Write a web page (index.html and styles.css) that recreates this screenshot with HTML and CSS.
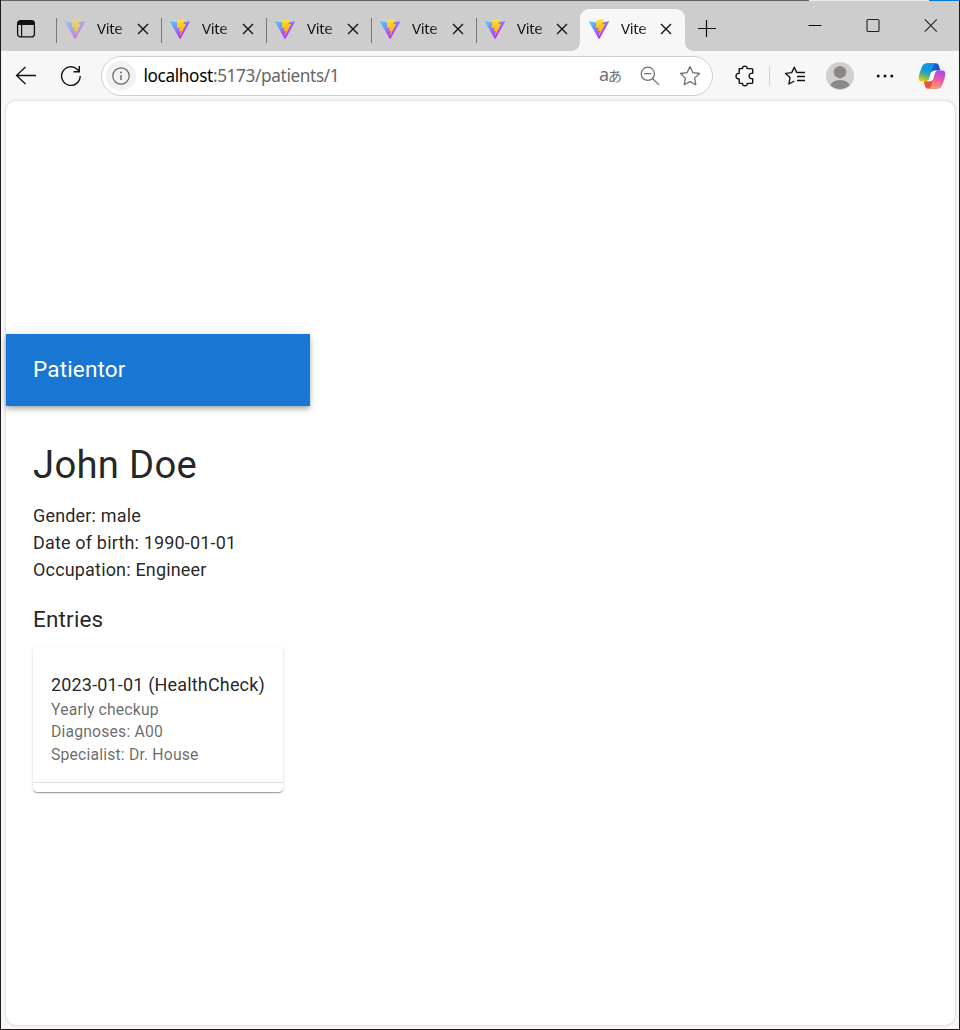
FILE: index.html
```html
<!DOCTYPE html>
<html lang="en">
<head>
<meta charset="utf-8">
<title>Patientor</title>
<link rel="stylesheet" href="styles.css">
</head>
<body>
<svg class="defs" width="0" height="0" aria-hidden="true">
  <defs>
    <linearGradient id="vite-a" x1="0%" x2="60%" y1="8%" y2="78%"><stop offset="0" stop-color="#41d1ff"/><stop offset="1" stop-color="#bd34fe"/></linearGradient>
    <linearGradient id="vite-b" x1="43%" x2="50%" y1="2%" y2="89%"><stop offset="0" stop-color="#ffea83"/><stop offset=".083" stop-color="#ffdd35"/><stop offset="1" stop-color="#ffa800"/></linearGradient>
    <symbol id="vite" viewBox="0 0 256 257">
      <path fill="url(#vite-a)" d="M255.153 37.938L134.897 252.976c-2.483 4.44-8.862 4.466-11.382.048L.875 37.958c-2.746-4.814 1.371-10.646 6.827-9.67l120.385 21.517a6.537 6.537 0 0 0 2.322-.004l117.867-21.483c5.438-.991 9.574 4.796 6.877 9.62Z"/>
      <path fill="url(#vite-b)" d="M185.432.063L96.44 17.501a3.268 3.268 0 0 0-2.634 3.014l-5.474 92.456a3.268 3.268 0 0 0 3.997 3.378l24.777-5.718c2.318-.535 4.413 1.507 3.936 3.838l-7.361 36.047c-.495 2.426 1.782 4.5 4.151 3.78l15.304-4.649c2.372-.72 4.652 1.36 4.15 3.788l-11.698 56.621c-.732 3.542 3.979 5.473 5.943 2.437l1.313-2.028l72.516-144.72c1.215-2.423-.88-5.186-3.54-4.672l-25.505 4.922c-2.396.462-4.435-1.77-3.759-4.114l16.646-57.705c.677-2.35-1.37-4.583-3.769-4.113Z"/>
    </symbol>
    <symbol id="close" viewBox="0 0 12 12"><path d="M1 1l10 10M11 1L1 11" fill="none" stroke="#111" stroke-width="1.35"/></symbol>
  </defs>
</svg>
<div class="window">
  <header class="tabstrip">
    <div class="tab-actions">
      <svg width="20" height="20" viewBox="0 0 20 20"><rect x="1.6" y="1.6" width="16.8" height="16.3" rx="3" fill="none" stroke="#111" stroke-width="1.3"/><path d="M1.5 6V4.5a3 3 0 0 1 3-3h11a3 3 0 0 1 3 3V6z" fill="#111"/><path d="M5.6 5v13" stroke="#111" stroke-width="1.2"/></svg>
    </div>
    <div class="tab tab-loading"><svg class="favicon"><use href="#vite"/></svg><span class="tab-title">Vite</span><svg class="tab-close"><use href="#close"/></svg></div>
    <div class="tab"><svg class="favicon"><use href="#vite"/></svg><span class="tab-title">Vite</span><svg class="tab-close"><use href="#close"/></svg></div>
    <div class="tab"><svg class="favicon"><use href="#vite"/></svg><span class="tab-title">Vite</span><svg class="tab-close"><use href="#close"/></svg></div>
    <div class="tab"><svg class="favicon"><use href="#vite"/></svg><span class="tab-title">Vite</span><svg class="tab-close"><use href="#close"/></svg></div>
    <div class="tab tab-last"><svg class="favicon"><use href="#vite"/></svg><span class="tab-title">Vite</span><svg class="tab-close"><use href="#close"/></svg></div>
    <div class="tab tab-active"><svg class="favicon"><use href="#vite"/></svg><span class="tab-title">Vite</span><svg class="tab-close"><use href="#close"/></svg></div>
    <svg class="new-tab" width="18" height="18" viewBox="0 0 18 18"><path d="M0 9.5h18M8.5 1v17" stroke="#111" stroke-width="1.2"/></svg>
    <div class="window-controls">
      <svg width="14" height="14" viewBox="0 0 14 14"><path d="M.5 7.5h13" stroke="#111"/></svg>
      <svg width="14" height="14" viewBox="0 0 14 14"><rect x="1" y="1.5" width="12" height="12" rx="1" fill="none" stroke="#222" stroke-width="1.1"/></svg>
      <svg width="14" height="14" viewBox="0 0 14 14"><path d="M.8 1.4l12 12.2M12.8 1.4L.8 13.6" stroke="#222" stroke-width="1.1"/></svg>
    </div>
  </header>
  <nav class="toolbar">
    <svg class="back" width="22" height="22" viewBox="0 0 22 22"><path d="M21 10.5H1.5M10.5 2L1.5 10.5l9 8.5" fill="none" stroke="#111" stroke-width="1.3"/></svg>
    <svg class="reload" width="22" height="22" viewBox="0 0 22 22"><path d="M20.2 11A9.3 9.3 0 1 1 17.2 4.2L19 6M19.3 1v5.7h-5.8" fill="none" stroke="#111" stroke-width="1.4"/></svg>
    <div class="address">
      <span class="site-info"><svg width="18" height="18" viewBox="0 0 18 18"><circle cx="9" cy="9" r="8.2" fill="none" stroke="#666" stroke-width="1.2"/><path d="M9 8v5" stroke="#666" stroke-width="1.4"/><circle cx="9" cy="5.5" r=".95" fill="#666"/></svg></span>
      <span class="url"><b>localhost</b>:5173/patients/1</span>
      <span class="translate"><i>a</i><em>あ</em></span>
      <svg class="zoom-out" width="20" height="20" viewBox="0 0 20 20"><path d="M12.7 12.7l6.3 6.2M4.2 7.7h7" stroke="#707070" stroke-width="1.25"/><circle cx="7.8" cy="7.8" r="6.6" fill="none" stroke="#707070" stroke-width="1.25"/></svg>
      <svg class="star" width="22" height="22" viewBox="0 0 22 22"><path d="M11 1.6l2.8 6 6.7.9-4.9 4.6 1.2 6.7-5.8-3.2-5.8 3.2 1.2-6.7L1.5 8.5l6.7-.9z" fill="none" stroke="#707070" stroke-width="1.3" stroke-linejoin="round"/></svg>
    </div>
    <svg class="extensions" width="20" height="22" viewBox="0 0 20 22"><path d="M4.2 3.6H7.6C7.2 1.8 8.4 1.1 9.8 1.1s2.7.8 2.3 2.5h4.6q1 0 1 1V8.2c-2-.3-3.6.9-3.6 2.8s1.6 3.1 3.6 2.8v3.6q0 1-1 1h-4.5c.3 1.6-.9 2.4-2.4 2.4s-2.6-.8-2.2-2.4H5.2q-1 0-1-1v-3.5C2.2 14.1 1 12.9 1 11.2s1.2-3 3.2-2.8z" fill="none" stroke="#111" stroke-width="1.4" stroke-linejoin="round"/></svg>
    <span class="separator"></span>
    <svg class="favorites" width="22" height="20" viewBox="0 0 22 20"><path d="M14.6 6.6l-1.9-.2L10.3 1.2 7.7 6.6l-6.1.8 4.4 4.2-1.1 6.4 5.4-3M13 10.5h8M13 6.5h8M13 14.5h8" fill="none" stroke="#111" stroke-width="1.35" stroke-linejoin="round"/></svg>
    <svg class="avatar" width="28" height="28" viewBox="0 0 28 28"><defs><clipPath id="disc"><circle cx="14" cy="14" r="13"/></clipPath></defs><circle cx="14" cy="14" r="14" fill="#d2d0ce"/><g fill="#8a8886" clip-path="url(#disc)"><circle cx="14" cy="10.2" r="6.2"/><ellipse cx="14" cy="25.2" rx="10.2" ry="7.3"/></g></svg>
    <svg class="more" width="18" height="4" viewBox="0 0 18 4"><g fill="#111"><circle cx="2.2" cy="2" r="1.5"/><circle cx="9" cy="2" r="1.5"/><circle cx="15.8" cy="2" r="1.5"/></g></svg>
    <svg class="copilot" width="28" height="26" viewBox="0 0 28 26">
      <defs>
        <linearGradient id="cp-a" x1=".6" y1="0" x2=".3" y2="1"><stop offset="0" stop-color="#1494e9"/><stop offset=".45" stop-color="#159bd3"/><stop offset=".72" stop-color="#5fb878"/><stop offset="1" stop-color="#f3ca00"/></linearGradient>
        <linearGradient id="cp-b" x1=".7" y1="0" x2=".3" y2="1"><stop offset="0" stop-color="#a84af0"/><stop offset=".5" stop-color="#ec5b9f"/><stop offset="1" stop-color="#ffa66c"/></linearGradient>
        <linearGradient id="cp-c" x1="0" y1="0" x2="1" y2="0"><stop offset="0" stop-color="#1389df"/><stop offset="1" stop-color="#1b42cb"/></linearGradient>
      </defs>
      <path fill="url(#cp-c)" d="M9 .2h9c1.7 0 2.5 1.3 3 2.8l1.4 4.6h-3c-2.4 0-3.3.4-4.2 1.4L10 9z"/>
      <path fill="#ee5139" d="M19 25.8h-9c-1.7 0-2.5-1.3-3-2.8l-1.3-4.7h3c2.4 0 3.3-.4 4.2-1.4L18 17z"/>
      <path fill="url(#cp-a)" d="M17.4.2H8.6C5.3.2 4.1 3 2.6 7.3 1 12-1.3 18.3 3.6 18.3h4c2.4 0 3.3-1.4 3.9-3.7L14.4 4.4C15.1 2 15.8.9 17.4.2z"/>
      <path fill="url(#cp-b)" d="M10.6 25.8h8.8c3.3 0 4.5-2.8 6-7.1C27 14 29.3 7.6 24.4 7.6h-4c-2.4 0-3.3 1.4-3.9 3.7l-2.9 10.3c-.7 2.4-1.4 3.5-3 4.2z"/>
      <path fill="#fff" d="M18.8 7.7h-2.6c-1.7 0-2.5.9-3 2.4L11.1 16c-.4 1.2-.9 1.9-2 2.3h2.7c1.7 0 2.6-.9 3.1-2.4l1.9-5.7c.5-1.4 1-2.1 2-2.5z"/>
    </svg>
  </nav>
  <main class="page">
    <div class="app">
      <div class="appbar">Patientor</div>
      <section class="patient">
        <h1 class="name">John Doe</h1>
        <p class="detail">Gender: male</p>
        <p class="detail">Date of birth: 1990-01-01</p>
        <p class="detail">Occupation: Engineer</p>
        <h2 class="entries">Entries</h2>
        <article class="card">
          <div class="entry">
            <p class="entry-title">2023-01-01 (HealthCheck)</p>
            <p class="entry-text">Yearly checkup</p>
            <p class="entry-text entry-codes">Diagnoses: A00</p>
            <p class="entry-text">Specialist: Dr. House</p>
          </div>
        </article>
      </section>
    </div>
  </main>
</div>
</body>
</html>
```
FILE: styles.css
```css
* { box-sizing: border-box; }
body { margin: 0; font-family: Roboto, sans-serif; }
h1, h2, p { margin: 0; font-weight: 400; }
svg { flex: none; display: block; }
.defs { position: absolute; }
.window {
  width: 960px; height: 1030px;
  display: flex; flex-direction: column;
  background: #f7f7f7;
  border: 1px solid #1f1a1b;
  border-top: 0;
}
.tabstrip {
  height: 51px; flex: none;
  display: flex; align-items: flex-start;
  background: linear-gradient(90deg, #656263 808px, #ececec 808px 928px, #0078d4 928px) top / 100% 1px no-repeat, #cdcdcd;
  font-family: "Noto Sans", sans-serif;
}
.tab-actions { width: 55px; padding: 19px 0 0 15px; }
.tab {
  position: relative;
  width: 105px; height: 42px; margin-top: 9px;
  display: flex; align-items: center;
  padding: 0 12px 2px 9px;
}
.tab::before {
  content: ""; position: absolute; left: 0; top: 9px;
  width: 1px; height: 25px; background: #777;
}
.favicon { width: 20px; height: 20px; }
.tab-loading .favicon { opacity: .5; }
.tab-title {
  width: 28px; margin: 0 0 2px 12px; overflow: hidden; white-space: nowrap;
  font-size: 15px; line-height: 20px; letter-spacing: -.35px; color: #111;
  -webkit-mask-image: linear-gradient(90deg, #000 65%, rgba(0, 0, 0, .5));
}
.tab-close { width: 12px; height: 12px; margin-left: 12px; }
.tab-last { width: 104px; }
.tab-last .tab-close, .tab-active .tab-close { margin-left: 11px; }
.tab-active { background: #f7f7f7; border-radius: 9px 9px 0 0; }
.tab-active::before, .tab-active::after {
  content: ""; position: absolute; top: auto; bottom: 0;
  width: 8px; height: 8px;
}
.tab-active::before { left: -8px; background: radial-gradient(circle at 0 0, transparent 7.5px, #f7f7f7 8px); }
.tab-active::after { left: auto; right: -8px; background: radial-gradient(circle at 100% 0, transparent 7.5px, #f7f7f7 8px); }
.new-tab { margin: 19px 0 0 13px; }
.window-controls { display: flex; gap: 44px; margin: 18px 21px 0 auto; }
.toolbar { height: 49px; flex: none; display: flex; align-items: center; padding-left: 14px; }
.reload { margin-left: 23px; }
.address {
  width: 612px; height: 40px; margin-left: 19px;
  display: flex; align-items: center;
  padding: 0 11px 0 4px;
  background: #fff; border: 1px solid #cfcfcf; border-radius: 20px;
}
.site-info {
  width: 30px; height: 30px; border-radius: 50%; background: #f2f2f2;
  display: flex; align-items: center; justify-content: center;
}
.url {
  margin-left: 7.5px; font: 17.2px/26px "Noto Sans", sans-serif;
  letter-spacing: -.36px; color: #666;
}
.url b { font-weight: 400; color: #000; }
.translate {
  display: flex; align-items: center; gap: 0; margin-left: auto;
  height: 22px; color: #707070; line-height: 20px;
}
.translate i { font: 18px/20px "Noto Sans", sans-serif; margin-top: -4px; }
.translate em { font: 14px/20px "Noto Sans CJK JP", sans-serif; margin: -1px 0 0 -1px; }
.zoom-out { margin-left: 18px; }
.star { margin-left: 19px; }
.extensions { margin-left: 22px; }
.separator { width: 1px; height: 20px; margin-left: 14px; background: #d0d0d0; }
.favorites { margin-left: 14px; }
.avatar { margin-left: 20px; }
.more { margin-left: 22px; }
.copilot { margin-left: 24px; }
.page {
  flex: none; width: 949px; height: 924px; margin: 1px 0 0 5px;
  display: flex; align-items: flex-start;
  padding-top: 233px;
  background: #fff; border-radius: 10px;
  box-shadow: 0 0 2px 1px rgba(0, 0, 0, .1);
}
.app { width: 304px; color: rgba(0, 0, 0, .87); }
.appbar {
  height: 72px; padding: 17px 27px;
  color: #fff; background: #1976d2;
  font-size: 22.5px; line-height: 36px; letter-spacing: .17px;
  box-shadow: 0 2px 4px -1px rgba(0, 0, 0, .2), 0 4px 5px rgba(0, 0, 0, .14), 0 1px 10px rgba(0, 0, 0, .12);
}
.patient { padding: 36px 27px 0; }
.name { font-size: 38.25px; line-height: 47px; letter-spacing: .28px; margin-bottom: 13px; }
.detail, .entry-title { font-size: 18px; line-height: 27px; letter-spacing: .17px; white-space: nowrap; }
.entries { margin: 18px 0 10px; font-size: 22.5px; line-height: 36px; letter-spacing: .17px; }
.card {
  width: 250px; height: 145px; border-radius: 4.5px; background: #fff;
  box-shadow: 0 2px 1px -1px rgba(0, 0, 0, .2), 0 1px 1px rgba(0, 0, 0, .14), 0 1px 3px rgba(0, 0, 0, .16);
}
.entry { height: 136px; padding: 24px 18px 0; border-bottom: 1px solid #e0e0e0; }
.entry-title { margin-bottom: 1px; }
.entry-text { font-size: 15.75px; line-height: 22px; letter-spacing: .17px; color: rgba(0, 0, 0, .6); }
.entry-codes { margin-bottom: 1px; }
```
